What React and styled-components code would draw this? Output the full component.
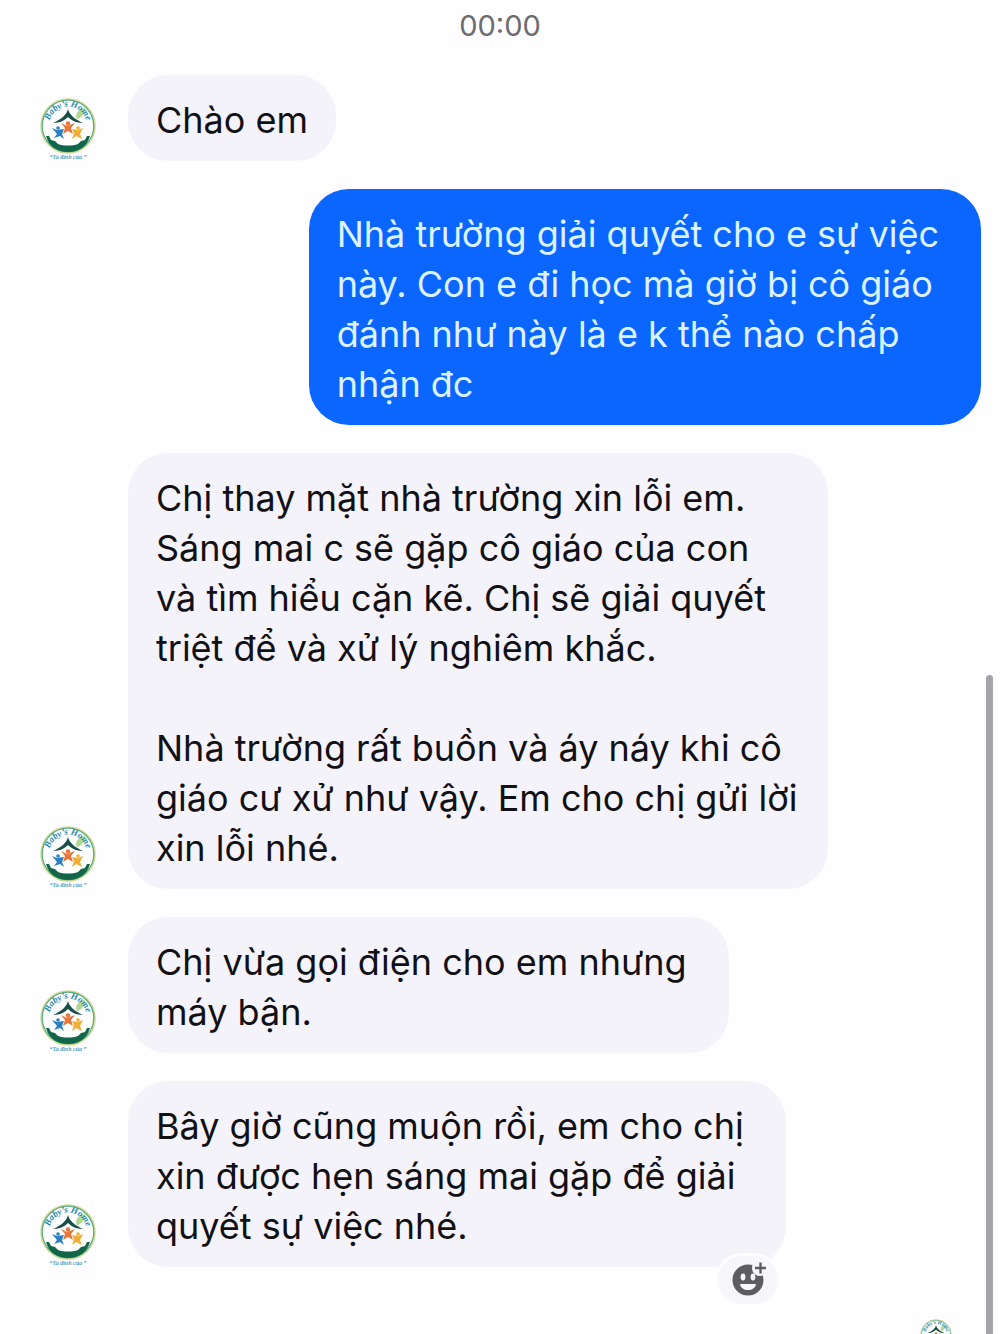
import { useId } from "react";
import styled, { createGlobalStyle } from "styled-components";

const messages = [
  { id: 1, mine: false, lines: ["Chào em"] },
  {
    id: 2,
    mine: true,
    lines: [
      "Nhà trường giải quyết cho e sự việc",
      "này. Con e đi học mà giờ bị cô giáo",
      "đánh như này là e k thể nào chấp",
      "nhận đc",
    ],
  },
  {
    id: 3,
    mine: false,
    lines: [
      "Chị thay mặt nhà trường xin lỗi em.",
      "Sáng mai c sẽ gặp cô giáo của con",
      "và tìm hiểu cặn kẽ. Chị sẽ giải quyết",
      "triệt để và xử lý nghiêm khắc.",
      "",
      "Nhà trường rất buồn và áy náy khi cô",
      "giáo cư xử như vậy. Em cho chị gửi lời",
      "xin lỗi nhé.",
    ],
  },
  {
    id: 4,
    mine: false,
    lines: ["Chị vừa gọi điện cho em nhưng", "máy bận."],
  },
  {
    id: 5,
    mine: false,
    reactable: true,
    lines: [
      "Bây giờ cũng muộn rồi, em cho chị",
      "xin được hẹn sáng mai gặp để giải",
      "quyết sự việc nhé.",
    ],
  },
];

const SchoolLogo = ({ caption }) => {
  const arc = useId();

  return (
    <Logo viewBox="0 0 56 63" aria-hidden="true">
      <circle cx="28" cy="28" r="27" fill="#fdfefd" stroke="#d5dc96" strokeWidth="1.6" />
      <circle cx="28" cy="28" r="25.8" fill="none" stroke="#5cab84" strokeWidth="1.3" />
      <path d="M36 19 C36 14 40 10 45 10 C45 15 42 20 37 21 Z" fill="#9bcf77" opacity="0.8" />
      <path id={arc} d="M9 27.5 A19 19 0 0 1 47 27.5" fill="none" />
      <text
        fill="#2385b0"
        fontFamily="Liberation Serif, serif"
        fontSize="9"
        fontStyle="italic"
        fontWeight="700"
        textAnchor="middle"
      >
        <textPath href={`#${arc}`} startOffset="50%">
          Baby’s Home
        </textPath>
      </text>
      <path
        d="M28 11 C29 16 34 21 43 25 C36 25 31 22 28 19 C25 22 20 25 13 25 C22 21 27 16 28 11 Z"
        fill="#174f47"
      />
      <circle cx="18" cy="30" r="1.8" fill="#2b7fc2" />
      <path d="M12 30 L17 32 L24 31 L22 36 L24 41 L20 38 L14 40 L17 36 Z" fill="#2b7fc2" />
      <circle cx="28" cy="25.5" r="2.2" fill="#e9763c" />
      <path d="M21 25 L27 28 L35 25 L31 30 L33 36 L28 33 L23 36 L25 30 Z" fill="#e9763c" />
      <circle cx="38" cy="30" r="1.8" fill="#efae36" />
      <path d="M32 31 L38 32 L43 30 L40 36 L42 41 L36 38 L32 41 L34 35 Z" fill="#efae36" />
      <path
        d="M6 38 L9 38 L11 42 L15 43 L18 46 C24 48 32 48 38 46 L41 43 L45 42 L47 38 L50 38 C47 49 38 54 28 54 C18 54 9 49 6 38 Z"
        fill="#11664a"
      />
      {caption && (
        <text
          x="28"
          y="61"
          fill="#4f9fc0"
          fontFamily="Liberation Serif, serif"
          fontSize="6"
          fontStyle="italic"
          fontWeight="700"
          textAnchor="middle"
        >
          {caption}
        </text>
      )}
    </Logo>
  );
};

const ReactionIcon = () => (
  <svg viewBox="0 0 36 36" width="36" height="36" aria-hidden="true">
    <circle cx="18" cy="18" r="15.5" fill="#5d5c61" />
    <ellipse cx="13" cy="15" rx="2.4" ry="3.4" fill="#f7f6fa" />
    <ellipse cx="23" cy="15" rx="2.4" ry="3.4" fill="#f7f6fa" />
    <path d="M10 22 H26 C25 30 11 30 10 22 Z" fill="#f7f6fa" />
    <circle cx="30" cy="6" r="8" fill="#f7f6fa" />
    <path d="M30.500 0.500 V11.500 M25 6 H36" stroke="#5d5c61" strokeWidth="2.4" />
  </svg>
);

const App = () => {
  return (
    <>
      <GlobalStyle />
      <Page>
        <Time>00:00</Time>
        <Thread>
          {messages.map((message) => (
            <Row key={message.id} $mine={message.mine}>
              {!message.mine && (
                <Avatar>
                  <SchoolLogo caption="“Ta đình của ”" />
                </Avatar>
              )}
              <Bubble $mine={message.mine} $multiline={message.lines.length > 1}>
                {message.lines.join("\n")}
                {message.reactable && (
                  <ReactionButton type="button" aria-label="Thả cảm xúc">
                    <ReactionIcon />
                  </ReactionButton>
                )}
              </Bubble>
            </Row>
          ))}
        </Thread>
        <Seen>
          <SchoolLogo />
        </Seen>
        <ScrollThumb />
      </Page>
    </>
  );
};

export default App;

/* Styled Components */
const GlobalStyle = createGlobalStyle`
  * {
    box-sizing: border-box;
  }

  body {
    margin: 0;
    background: #fefdff;
    font-family: Inter, "Liberation Sans", sans-serif;
  }
`;

const Page = styled.main`
  position: relative;
  height: 100vh;
  overflow: hidden;
`;

const Time = styled.time`
  display: block;
  padding-top: 8px;
  height: 75px;
  color: #6c6b70;
  font-size: 29px;
  line-height: 36px;
  text-align: center;
`;

const Thread = styled.div`
  display: flex;
  flex-direction: column;
  gap: 28px;
  padding: 0 19px 0 40px;
`;

const Row = styled.div`
  display: flex;
  align-items: flex-end;
  justify-content: ${(props) => (props.$mine ? "flex-end" : "flex-start")};
  gap: 32px;
`;

const Avatar = styled.div`
  display: flex;
  flex: none;
  width: 56px;
`;

const Logo = styled.svg`
  display: block;
  width: 100%;
  overflow: visible;
`;

const Bubble = styled.div`
  position: relative;
  max-width: 700px;
  padding: 20px ${(props) => (props.$multiline ? 42 : 28)}px 16px 28px;
  border-radius: 40px;
  background: ${(props) => (props.$mine ? "#0a66ff" : "#f5f3fa")};
  color: ${(props) => (props.$mine ? "#dcf3ff" : "#111015")};
  font-size: 36px;
  line-height: 50px;
  white-space: pre;
`;

const ReactionButton = styled.button`
  position: absolute;
  right: 5px;
  bottom: -40px;
  display: flex;
  align-items: center;
  justify-content: center;
  width: 66px;
  height: 54px;
  padding: 0;
  border: 3px solid #fefdff;
  border-radius: 27px;
  background: #f7f6fa;
`;

const Seen = styled.div`
  width: 32px;
  margin: 52px 48px 0 auto;
`;

const ScrollThumb = styled.div`
  position: absolute;
  top: 675px;
  right: 7px;
  bottom: -8px;
  width: 7px;
  border-radius: 4px;
  background: #a5a4a8;
`;
